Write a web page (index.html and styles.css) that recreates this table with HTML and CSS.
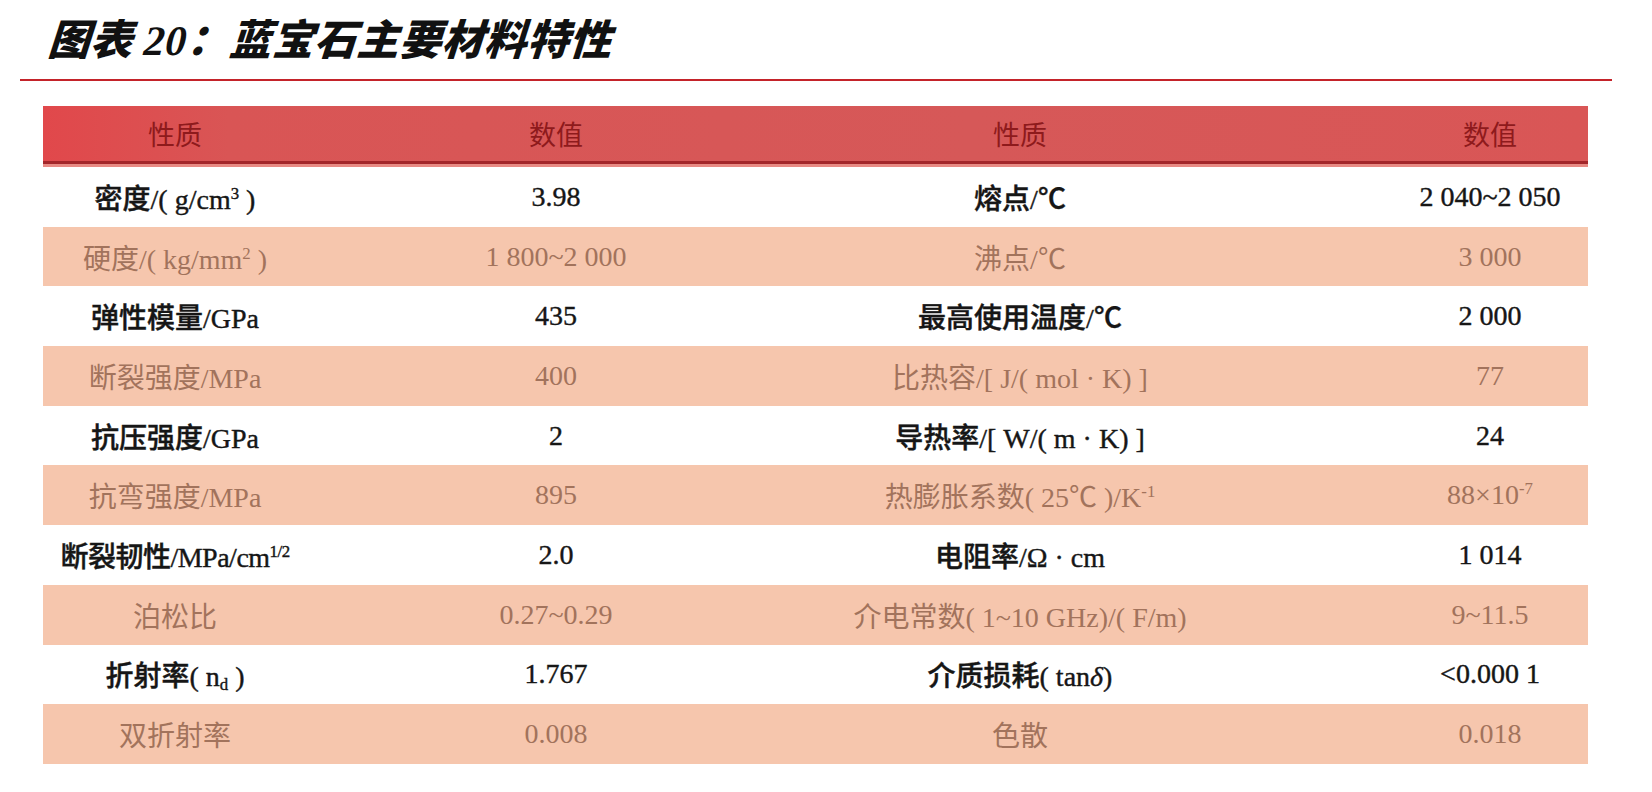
FILE: index.html
```html
<!DOCTYPE html>
<html lang="zh">
<head>
<meta charset="utf-8">
<title>图表 20：蓝宝石主要材料特性</title>
<link rel="stylesheet" href="styles.css">
</head>
<body>
<div class="title-bar">
  <h1 class="title">图表 <span class="num">20</span>：蓝宝石主要材料特性</h1>
</div>
<div class="table">
  <div class="thead">
    <div class="hrow">
      <div class="c1">性质</div>
      <div class="c2">数值</div>
      <div class="c3">性质</div>
      <div class="c4">数值</div>
    </div>
  </div>
  <div class="row light">
    <div class="c1">密度/( g/cm<sup>3</sup> )</div>
    <div class="c2">3.98</div>
    <div class="c3">熔点/℃</div>
    <div class="c4">2 040~2 050</div>
  </div>
  <div class="row peach">
    <div class="c1">硬度/( kg/mm<sup>2</sup> )</div>
    <div class="c2">1 800~2 000</div>
    <div class="c3">沸点/℃</div>
    <div class="c4">3 000</div>
  </div>
  <div class="row light">
    <div class="c1">弹性模量/GPa</div>
    <div class="c2">435</div>
    <div class="c3">最高使用温度/℃</div>
    <div class="c4">2 000</div>
  </div>
  <div class="row peach">
    <div class="c1">断裂强度/MPa</div>
    <div class="c2">400</div>
    <div class="c3">比热容/[ J/( mol · K) ]</div>
    <div class="c4">77</div>
  </div>
  <div class="row light">
    <div class="c1">抗压强度/GPa</div>
    <div class="c2">2</div>
    <div class="c3">导热率/[ W/( m · K) ]</div>
    <div class="c4">24</div>
  </div>
  <div class="row peach">
    <div class="c1">抗弯强度/MPa</div>
    <div class="c2">895</div>
    <div class="c3">热膨胀系数( 25℃ )/K<sup>-1</sup></div>
    <div class="c4">88×10<sup>-7</sup></div>
  </div>
  <div class="row light">
    <div class="c1 tight">断裂韧性/MPa/cm<sup>1/2</sup></div>
    <div class="c2">2.0</div>
    <div class="c3">电阻率/Ω · cm</div>
    <div class="c4">1 014</div>
  </div>
  <div class="row peach">
    <div class="c1">泊松比</div>
    <div class="c2">0.27~0.29</div>
    <div class="c3">介电常数( 1~10 GHz)/( F/m)</div>
    <div class="c4">9~11.5</div>
  </div>
  <div class="row light">
    <div class="c1">折射率( n<sub>d</sub> )</div>
    <div class="c2">1.767</div>
    <div class="c3">介质损耗( tan<i>δ</i>)</div>
    <div class="c4">&lt;0.000 1</div>
  </div>
  <div class="row peach">
    <div class="c1">双折射率</div>
    <div class="c2">0.008</div>
    <div class="c3">色散</div>
    <div class="c4">0.018</div>
  </div>
</div>
</body>
</html>
```
FILE: styles.css
```css
html, body {
  margin: 0;
  padding: 0;
  background: #ffffff;
}

body {
  width: 1652px;
  height: 792px;
  overflow: hidden;
  font-family: "Liberation Serif", "Noto Sans CJK SC", serif;
}

.title-bar {
  margin: 0 40px 0 20px;
  height: 81px;
  border-bottom: 2px solid #c4232a;
  display: flex;
  align-items: center;
  box-sizing: border-box;
  padding-left: 28px;
  padding-top: 2px;
}

.title {
  margin: 0;
  font-family: "Liberation Serif", "Noto Sans CJK SC", serif;
  font-size: 42px;
  font-weight: 900;
  font-style: italic;
  color: #111111;
  letter-spacing: 0.5px;
  line-height: 1;
  transform: skewX(-4deg);
}

.title .num {
  font-weight: 700;
}

.table {
  margin: 25px 64px 0 43px;
}

.thead {
  background: #e88a84;
  padding-bottom: 3px;
}

.hrow {
  height: 55px;
  border-bottom: 3px solid #a3262a;
  background: linear-gradient(90deg, #e1484b 0%, #d95555 12%, #d65858 60%, #d95656 100%);
  display: grid;
  grid-template-columns: 264px 498px 430px 353px;
  align-items: center;
  color: #8e1a1c;
  font-size: 27px;
}

.row {
  height: 59.7px;
  display: grid;
  grid-template-columns: 264px 498px 430px 353px;
  align-items: center;
  font-size: 28px;
}

.hrow > div,
.row > div {
  text-align: center;
  white-space: nowrap;
}

.c4 {
  padding-left: 157px;
}

.light {
  background: #ffffff;
  color: #161616;
  font-weight: 500;
  -webkit-text-stroke: 0.4px #161616;
}

.peach {
  background: #f6c6ad;
  color: #a2735c;
}

.tight {
  letter-spacing: -0.5px;
}

sup {
  font-size: 0.6em;
  vertical-align: 0.6em;
  line-height: 0;
}

sub {
  font-size: 0.6em;
  vertical-align: -0.25em;
  line-height: 0;
}
```
